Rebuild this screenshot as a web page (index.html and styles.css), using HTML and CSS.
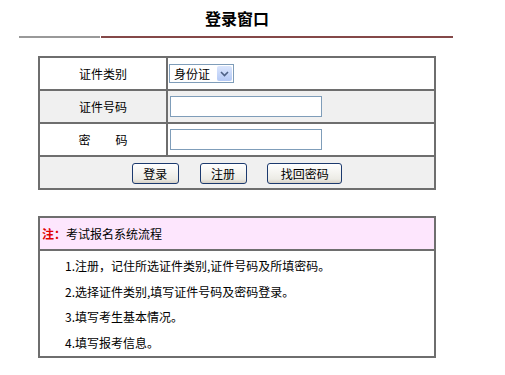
FILE: index.html
```html
<!DOCTYPE html>
<html lang="zh-CN">
  <head>
    <meta charset="UTF-8" />
    <title>登录窗口</title>
    <link rel="stylesheet" href="styles.css">
  </head>
  <body>
    <div class="wrap">
      <h2 class="title">登录窗口</h2>
      <div class="rule">
        <span class="rule-gray"></span>
        <span class="rule-red"></span>
      </div>

      <form class="login" onsubmit="return false;">
        <table class="login-table">
          <tr>
            <td class="label">证件类别</td>
            <td class="field">
              <div class="select">
                <span class="select-text">身份证</span>
                <span class="select-btn">
                  <svg width="9" height="6" viewBox="0 0 9 6"><path d="M1 1 L4.5 4.5 L8 1" fill="none" stroke="#4d6185" stroke-width="1.6"/></svg>
                </span>
              </div>
            </td>
          </tr>
          <tr class="gray">
            <td class="label">证件号码</td>
            <td class="field"><input type="text" class="text-input" /></td>
          </tr>
          <tr>
            <td class="label">密<span class="gap"></span>码</td>
            <td class="field"><input type="password" class="text-input" /></td>
          </tr>
          <tr class="gray">
            <td colspan="2" class="buttons">
              <button type="submit" class="btn">登录</button>
              <button type="button" class="btn">注册</button>
              <button type="button" class="btn btn-wide">找回密码</button>
            </td>
          </tr>
        </table>
      </form>

      <table class="note-table">
        <tr>
          <td class="note-head"><span class="note-mark">注：</span>考试报名系统流程</td>
        </tr>
        <tr>
          <td class="note-body">
            <p>1.注册，记住所选证件类别,证件号码及所填密码。</p>
            <p>2.选择证件类别,填写证件号码及密码登录。</p>
            <p>3.填写考生基本情况。</p>
            <p>4.填写报考信息。</p>
          </td>
        </tr>
      </table>
    </div>
  </body>
</html>
```

FILE: styles.css
```css
* {
  box-sizing: border-box;
}
html,
body {
  margin: 0;
  padding: 0;
  background: #fff;
  color: #000;
  font-family: "Noto Sans CJK SC", "DejaVu Sans", sans-serif;
  font-size: 12px;
}
.wrap {
  width: 434px;
  margin-left: 19px;
}
.title {
  margin: 0;
  padding-top: 8px;
  height: 36px;
  text-align: center;
  font-size: 16px;
  line-height: 20px;
  font-weight: bold;
  padding-left: 2px;
}
.rule {
  display: flex;
  gap: 1px;
  height: 2px;
}
.rule-gray {
  width: 81px;
  background: #999999;
}
.rule-red {
  flex: 1;
  background: #844848;
}
.login {
  margin: 18px 0 0 19px;
}
table {
  border-collapse: collapse;
  width: 398px;
}
.login-table {
  border: 2px solid #5e5e5e;
}
.login-table td {
  border: 2px solid #6e6e6e;
  padding: 0;
}
.login-table tr {
  height: 33px;
}
.gray td {
  background: #f0f0f0;
}
.label {
  width: 128px;
  text-align: center;
}
.gap {
  display: inline-block;
  width: 25px;
}
.field {
  padding-left: 1px !important;
}
.select {
  display: inline-flex;
  align-items: center;
  width: 65px;
  height: 19px;
  border: 1px solid #7f9db9;
  background: #fff;
}
.select-text {
  flex: 1;
  padding-left: 4px;
  line-height: 17px;
}
.select-btn {
  width: 15px;
  height: 15px;
  margin-right: 1px;
  display: flex;
  align-items: center;
  justify-content: center;
  background: linear-gradient(#dbe6fd, #b4c9f5);
  border-radius: 2px;
}
.text-input {
  display: block;
  margin-left: 1px;
  width: 152px;
  height: 21px;
  border: 1px solid #7f9db9;
  background: #fff;
  padding: 0;
}
.buttons {
  text-align: center;
  padding-top: 1px !important;
}
.btn {
  font-family: "Noto Sans CJK SC", "DejaVu Sans", sans-serif;
  font-size: 12px;
  height: 21px;
  width: 47px;
  padding: 0;
  margin: 0 9px;
  border: 1px solid #1c3a6e;
  border-radius: 3px;
  background: linear-gradient(#ffffff, #ecebe5 80%, #d6d0c5);
  color: #000;
  line-height: 19px;
}
.btn-wide {
  width: 75px;
}
.note-table {
  margin: 26px 0 0 19px;
  border: 2px solid #5e5e5e;
}
.note-table td {
  border: 2px solid #6e6e6e;
  padding: 0;
}
.note-head {
  height: 33px;
  background: #fde6fd;
  padding-left: 2px !important;
}
.note-mark {
  color: #e00000;
  font-weight: bold;
}
.note-body {
  padding: 2px 0 1px 25px !important;
}
.note-body p {
  margin: 0;
  line-height: 25.5px;
}
```
